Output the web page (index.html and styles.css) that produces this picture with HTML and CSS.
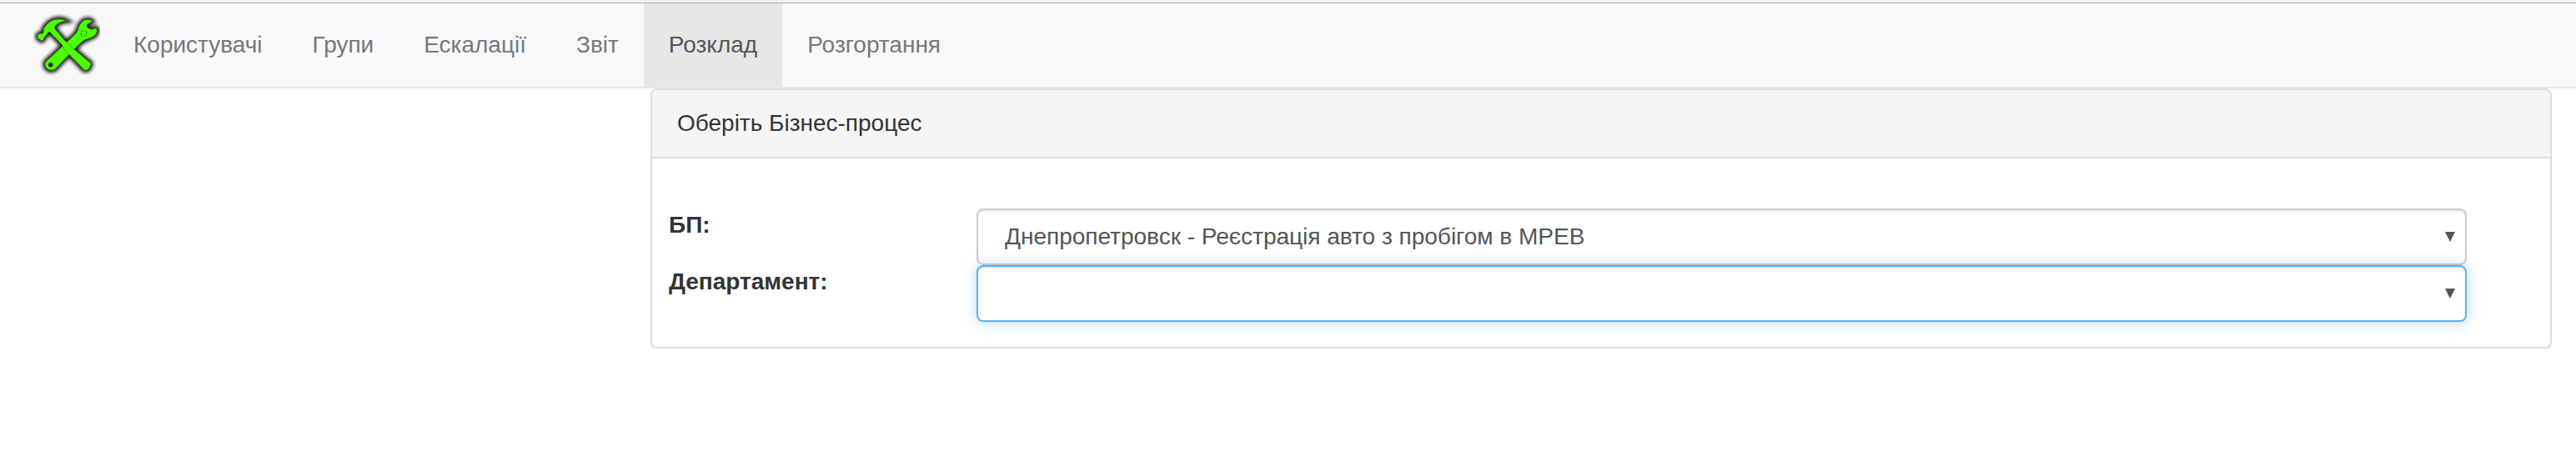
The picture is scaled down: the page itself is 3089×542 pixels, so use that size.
FILE: index.html
```html
<!DOCTYPE html>
<html lang="uk">
<head>
<meta charset="utf-8">
<title>Розклад</title>
<link rel="stylesheet" href="styles.css">
</head>
<body>
<nav class="navbar">
  <a class="brand" href="#">
    <svg class="logo" viewBox="30 30 240 270" aria-hidden="true">
      <defs>
        <filter id="glow" x="-30%" y="-30%" width="160%" height="160%"><feGaussianBlur stdDeviation="7"/></filter>
        <path id="wrench" d="M76 221L177 127C185 119 190 111 192 103C196 86 206 75 219 71C229 69 237 71 242 77L225 86C222 92 223 98 227 101L240 106L255 101C260 105 260 113 256 121C250 131 240 134 229 138C215 142 205 149 198 156L116 240C108 254 87 257 77 244C71 236 71 228 76 221Z"/>
        <path id="hammer" d="M45 128C49 121 55 120 63 121C67 118 67 112 67 104C76 88 88 76 106 71C121 67 136 68 149 75C132 77 115 84 107 96C104 102 111 108 117 115L145 148C154 153 162 159 166 168L237 228C238 231 235 237 232 243C228 249 221 254 215 252C209 250 206 244 200 238L146 183C139 177 138 168 133 161L89 115C83 116 80 120 77 126C73 130 69 133 68 139C65 147 59 148 54 143C49 139 43 135 45 128Z"/>
      </defs>
      <g class="logo-shadow" filter="url(#glow)"><use href="#wrench"/><use href="#hammer"/></g>
      <g class="logo-shape"><use href="#wrench"/><circle class="logo-hole" cx="92" cy="233" r="8"/><path class="logo-mark" d="M202 113l9-4M216 110l5 4-1 8M202 118l-1 8 5 5M211 131l8-5"/><use href="#hammer"/></g>
    </svg>
  </a>
  <a class="nav-link" href="#">Користувачі</a>
  <a class="nav-link" href="#">Групи</a>
  <a class="nav-link" href="#">Ескалації</a>
  <a class="nav-link" href="#">Звіт</a>
  <a class="nav-link active" href="#">Розклад</a>
  <a class="nav-link" href="#">Розгортання</a>
</nav>
<main class="panel">
  <header class="panel-heading">Оберіть Бізнес-процес</header>
  <form class="panel-body">
    <div class="row">
      <label class="label" for="process">БП:</label>
      <div class="field">
        <select class="select" id="process"><option>Днепропетровск - Реєстрація авто з пробігом в МРЕВ</option></select>
        <svg class="arrow" viewBox="0 0 12 12" aria-hidden="true"><path d="M0 0H12L6 12Z"/></svg>
      </div>
    </div>
    <div class="row">
      <label class="label" for="department">Департамент:</label>
      <div class="field">
        <select class="select focused" id="department"><option></option></select>
        <svg class="arrow" viewBox="0 0 12 12" aria-hidden="true"><path d="M0 0H12L6 12Z"/></svg>
      </div>
    </div>
  </form>
</main>
</body>
</html>
```

FILE: styles.css
```css
* { box-sizing: border-box; }

body {
  margin: 0;
  background: #fff;
  color: #333;
  font: 28px/40px "Liberation Sans", Arial, sans-serif;
  border-top: 3px solid #f1f1f1;
}

.navbar {
  display: flex;
  height: 103px;
  padding-left: 40px;
  background: #f8f8f8;
  border-top: 1px solid #b0b0b0;
  border-bottom: 2px solid #e7e7e7;
}

.brand { width: 90px; padding-top: 6px; }
.logo { display: block; width: 80px; height: 90px; }
.logo-shadow { fill: #000; stroke: #000; stroke-width: 18; opacity: .9; }
.logo-shape { fill: #4cff00; stroke: #1f6a0c; stroke-width: 1.5; }
.logo-shape .logo-hole { fill: #082b04; }
.logo-mark { fill: none; stroke: #168005; stroke-width: 3; }

.nav-link {
  height: 100px;
  padding: 30px;
  color: #777;
  text-decoration: none;
  white-space: nowrap;
}
.nav-link.active { height: 101px; color: #555; background: #e7e7e7; }

.panel {
  width: 2280px;
  height: 312px;
  margin-left: 780px;
  background: #fff;
  border: 2px solid #ddd;
  border-radius: 8px;
  box-shadow: 0 2px 2px rgba(0, 0, 0, .05);
}

.panel-heading {
  height: 82px;
  padding: 20px 30px;
  background: #f5f5f5;
  border-bottom: 2px solid #ddd;
  border-radius: 6px 6px 0 0;
}

.panel-body { padding: 60px 0 30px 20px; }
.row { display: flex; height: 68px; }
.label { width: 369px; font-weight: bold; }
.field { position: relative; width: 1787px; }

.select {
  display: block;
  width: 100%;
  height: 68px;
  margin: 0;
  padding: 12px 32px;
  appearance: none;
  background: #fff;
  color: #555;
  font: inherit;
  border: 2px solid #ccc;
  border-radius: 8px;
  box-shadow: inset 0 2px 2px rgba(0, 0, 0, .075);
}
.select.focused {
  border-color: #66afe9;
  box-shadow: inset 0 2px 2px rgba(0, 0, 0, .075), 0 0 16px rgba(102, 175, 233, .5);
}
.arrow {
  position: absolute;
  top: 28px;
  right: 14px;
  width: 12px;
  height: 12px;
  fill: #555;
}
```
